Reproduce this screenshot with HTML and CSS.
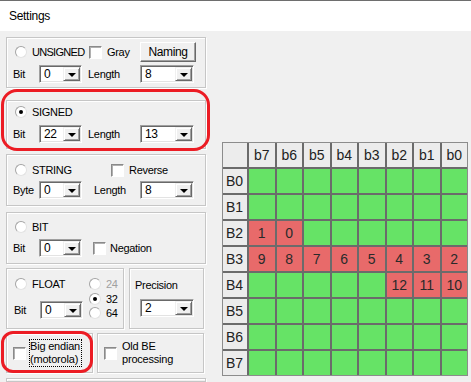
FILE: index.html
```html
<!DOCTYPE html>
<html lang="en">
<head>
    <meta charset="UTF-8">
    <meta name="viewport" content="width=device-width, initial-scale=1.0">
    <title>Settings</title>
    <link rel="stylesheet" href="styles.css">
</head>
<body>

    <!-- Window title -->
    <div class="titlebar">Settings</div>

    <div class="main">
        <!-- Left column: signal type settings -->
        <div class="left">

            <div class="group g-unsigned">
                <div class="row top-row">
                    <span class="radio"></span>
                    <span class="opt w-unsigned">UNSIGNED</span>
                    <span class="check"></span>
                    <span class="opt w-gray">Gray</span>
                    <span class="button naming">Naming</span>
                </div>
                <div class="row field-row">
                    <span class="field-label">Bit</span>
                    <span class="combo small"><span class="val">0</span><span class="drop"></span></span>
                    <span class="field-label len">Length</span>
                    <span class="combo wide"><span class="val">8</span><span class="drop"></span></span>
                </div>
            </div>

            <div class="group g-signed">
                <div class="row top-row">
                    <span class="radio checked"></span>
                    <span class="opt">SIGNED</span>
                </div>
                <div class="row field-row">
                    <span class="field-label">Bit</span>
                    <span class="combo small"><span class="val">22</span><span class="drop"></span></span>
                    <span class="field-label len">Length</span>
                    <span class="combo wide"><span class="val">13</span><span class="drop"></span></span>
                </div>
            </div>

            <div class="group g-string">
                <div class="row top-row">
                    <span class="radio"></span>
                    <span class="opt w-string">STRING</span>
                    <span class="check"></span>
                    <span class="opt">Reverse</span>
                </div>
                <div class="row field-row">
                    <span class="field-label">Byte</span>
                    <span class="combo small"><span class="val">0</span><span class="drop"></span></span>
                    <span class="field-label len len-string">Length</span>
                    <span class="combo wide"><span class="val">8</span><span class="drop"></span></span>
                </div>
            </div>

            <div class="group g-bit">
                <div class="row top-row">
                    <span class="radio"></span>
                    <span class="opt">BIT</span>
                </div>
                <div class="row field-row">
                    <span class="field-label">Bit</span>
                    <span class="combo small"><span class="val">0</span><span class="drop"></span></span>
                    <span class="check neg-check"></span>
                    <span class="opt">Negation</span>
                </div>
            </div>

            <div class="pair float-row">
                <div class="group g-float">
                    <div class="float-left">
                        <div class="row top-row">
                            <span class="radio"></span>
                            <span class="opt">FLOAT</span>
                        </div>
                        <div class="row field-row float-bit">
                            <span class="field-label">Bit</span>
                            <span class="combo small"><span class="val">0</span><span class="drop"></span></span>
                        </div>
                    </div>
                    <div class="float-sizes">
                        <div class="row size-row"><span class="radio"></span><span class="opt disabled">24</span></div>
                        <div class="row size-row second"><span class="radio checked"></span><span class="opt">32</span></div>
                        <div class="row size-row"><span class="radio"></span><span class="opt">64</span></div>
                    </div>
                </div>
                <div class="group g-precision">
                    <div class="prec-label">Precision</div>
                    <span class="combo wide prec-combo"><span class="val">2</span><span class="drop"></span></span>
                </div>
            </div>

            <div class="pair endian-row">
                <div class="group g-endian">
                    <span class="check"></span>
                    <span class="two-line focused">Big endian<br>(motorola)</span>
                </div>
                <div class="group g-oldbe">
                    <span class="check"></span>
                    <span class="two-line">Old BE<br>processing</span>
                </div>
            </div>

            <div class="group g-more"></div>
        </div>

        <!-- Right side: bit layout of the message -->
        <div class="bitmap">
            <div class="hd corner"></div>
            <div class="hd">b7</div><div class="hd">b6</div><div class="hd">b5</div><div class="hd">b4</div>
            <div class="hd">b3</div><div class="hd">b2</div><div class="hd">b1</div><div class="hd">b0</div>

            <div class="rl">B0</div>
            <div class="c"></div><div class="c"></div><div class="c"></div><div class="c"></div>
            <div class="c"></div><div class="c"></div><div class="c"></div><div class="c"></div>

            <div class="rl">B1</div>
            <div class="c"></div><div class="c"></div><div class="c"></div><div class="c"></div>
            <div class="c"></div><div class="c"></div><div class="c"></div><div class="c"></div>

            <div class="rl">B2</div>
            <div class="c used">1</div><div class="c used">0</div><div class="c"></div><div class="c"></div>
            <div class="c"></div><div class="c"></div><div class="c"></div><div class="c"></div>

            <div class="rl">B3</div>
            <div class="c used">9</div><div class="c used">8</div><div class="c used">7</div><div class="c used">6</div>
            <div class="c used">5</div><div class="c used">4</div><div class="c used">3</div><div class="c used">2</div>

            <div class="rl">B4</div>
            <div class="c"></div><div class="c"></div><div class="c"></div><div class="c"></div>
            <div class="c"></div><div class="c used">12</div><div class="c used">11</div><div class="c used">10</div>

            <div class="rl">B5</div>
            <div class="c"></div><div class="c"></div><div class="c"></div><div class="c"></div>
            <div class="c"></div><div class="c"></div><div class="c"></div><div class="c"></div>

            <div class="rl">B6</div>
            <div class="c"></div><div class="c"></div><div class="c"></div><div class="c"></div>
            <div class="c"></div><div class="c"></div><div class="c"></div><div class="c"></div>

            <div class="rl">B7</div>
            <div class="c"></div><div class="c"></div><div class="c"></div><div class="c"></div>
            <div class="c"></div><div class="c"></div><div class="c"></div><div class="c"></div>
        </div>
    </div>

    <!-- Red highlight marks drawn over the screenshot -->
    <div class="mark mark-signed"></div>
    <div class="mark mark-endian"></div>

</body>
</html>
```

FILE: styles.css
```css
/* General page styling */
body {
    margin: 0;
    width: 471px;
    height: 382px;
    overflow: hidden;
    position: relative;
    background: #f0f0f0;
    font-family: 'Liberation Sans', Arial, sans-serif;
    font-size: 11px;
    letter-spacing: -0.3px;
    color: #000;
}

/* Title bar */
.titlebar {
    height: 30px;
    border-top: 1px solid #6e6e6e;
    background: #fff;
    padding-left: 9px;
    font-size: 12px;
    letter-spacing: -0.3px;
    line-height: 30px;
}

.main {
    display: flex;
    height: 351px;
    overflow: hidden;
}

/* Left column */
.left {
    width: 200px;
    margin-left: 6px;
    padding-top: 6px;
}

.group {
    box-sizing: border-box;
    border: 1px solid #c6c6c6;
    box-shadow: inset 1px 1px 0 #fff, 1px 1px 0 #fff;
}

.g-unsigned { height: 51px; padding-top: 7px; }
.g-signed   { height: 49px; padding-top: 4px; margin-top: 12px; }
.g-string   { height: 52px; padding-top: 8px; margin-top: 5px; }
.g-bit      { height: 52px; padding-top: 7px; margin-top: 6px; }

.g-unsigned .field-row { margin-top: 6px; }
.g-signed .field-row { margin-top: 6px; }
.g-string .field-row { margin-top: 4px; }
.g-bit .field-row { margin-top: 5px; }

.row {
    display: flex;
    align-items: center;
}

.top-row {
    height: 14px;
    padding-left: 8px;
}

.field-row {
    height: 18px;
    padding-left: 6px;
}

.opt {
    margin-left: 5px;
    white-space: nowrap;
}

.w-unsigned {
    width: 57px;
    letter-spacing: -0.7px;
}

.w-gray { width: 33px; }
.w-string { width: 79px; }

.disabled {
    color: #a0a0a0;
}

.field-label {
    width: 26px;
}

.field-label.len {
    width: 52px;
    margin-left: 6px;
}

.field-label.len-string {
    width: 46px;
    margin-left: 12px;
}

/* Radio buttons and check boxes */
.radio {
    box-sizing: border-box;
    width: 12px;
    height: 12px;
    border-radius: 50%;
    border: 1px solid;
    border-color: #a4a4a4 #e2e2e2 #e2e2e2 #a4a4a4;
    background: #fff;
    position: relative;
    flex-shrink: 0;
}

.radio.checked::after {
    content: '';
    position: absolute;
    left: 3px;
    top: 3px;
    width: 4px;
    height: 4px;
    border-radius: 50%;
    background: #000;
}

.check {
    box-sizing: border-box;
    width: 13px;
    height: 13px;
    border: 1px solid;
    border-color: #8a8a8a #fff #fff #8a8a8a;
    box-shadow: inset 1px 1px 0 #b0b0b0;
    background: #fff;
    flex-shrink: 0;
}

.neg-check {
    margin-left: 11px;
}

.neg-check + .opt {
    margin-left: 4px;
}

/* Push button */
.button {
    box-sizing: border-box;
    height: 20px;
    border: 1px solid;
    border-color: #fff #696969 #696969 #fff;
    box-shadow: inset -1px -1px 0 #a0a0a0;
    background: #f0f0f0;
    text-align: center;
    line-height: 18px;
    font-size: 12px;
    letter-spacing: -0.4px;
}

.naming {
    width: 56px;
}

/* Combo boxes */
.combo {
    box-sizing: border-box;
    display: flex;
    height: 18px;
    border: 1px solid;
    border-color: #a0a0a0 #fff #fff #a0a0a0;
    box-shadow: inset 1px 1px 0 #696969, inset -1px -1px 0 #e3e3e3;
    background: #fff;
    padding: 1px;
    flex-shrink: 0;
}

.combo.small { width: 43px; }
.combo.wide { width: 54px; }

.combo .val {
    flex: 1;
    padding-left: 3px;
    line-height: 14px;
    font-size: 12px;
    letter-spacing: -0.3px;
}

.drop {
    box-sizing: border-box;
    width: 17px;
    height: 14px;
    border: 1px solid;
    border-color: #f0f0f0 #696969 #696969 #f0f0f0;
    box-shadow: inset 1px 1px 0 #fff, inset -1px -1px 0 #a0a0a0;
    background: #f0f0f0;
    display: flex;
    align-items: center;
    justify-content: center;
}

.drop::after {
    content: '';
    border-top: 4px solid #000;
    border-left: 4px solid transparent;
    border-right: 4px solid transparent;
    margin-top: 1px;
}

/* Float and precision */
.pair {
    display: flex;
    gap: 5px;
}

.float-row {
    margin-top: 4px;
}

.g-float {
    width: 118px;
    height: 61px;
    display: flex;
}

.float-left {
    width: 82px;
    padding-top: 8px;
}

.float-bit {
    margin-top: 10px;
    padding-left: 7px;
}

.float-sizes {
    padding-top: 8px;
}

.size-row {
    height: 14px;
}

.size-row.second {
    margin-top: 1px;
}

.g-precision {
    width: 75px;
    height: 61px;
    padding: 10px 0 0 5px;
}

.prec-label {
    height: 12px;
    line-height: 12px;
}

.prec-combo {
    margin: 8px 0 0 5px;
}

/* Endianness */
.endian-row {
    margin-top: 4px;
    gap: 4px;
}

.g-endian,
.g-oldbe {
    height: 40px;
    display: flex;
    align-items: center;
    padding-left: 6px;
}

.g-endian { width: 87px; }
.g-oldbe { width: 107px; }

.two-line {
    margin-left: 4px;
    line-height: 13px;
    font-size: 11px;
    letter-spacing: -0.2px;
    border: 1px solid transparent;
}

.two-line.focused {
    border: 1px dotted #000;
    margin-left: 3px;
    padding-right: 1px;
}

.g-more {
    margin-top: 5px;
    height: 4px;
}

/* Bit layout table */
.bitmap {
    margin: 111px 0 0 16px;
    display: grid;
    grid-template-columns: 24px repeat(8, 25.5px);
    grid-template-rows: repeat(9, 24px);
    gap: 2px;
    border: 1px solid #8c8c8c;
    background: #6b6b6b;
    align-self: flex-start;
    font-size: 14px;
    letter-spacing: 0;
}

.hd,
.rl {
    background: #ececec;
    color: #222;
    line-height: 24px;
}

.hd {
    text-align: center;
}

.rl {
    padding-left: 3px;
}

.c {
    background: #66e366;
    color: #2a2a2a;
    text-align: center;
    line-height: 24px;
}

.c.used {
    background: #e86a6a;
}

/* Red annotation marks */
.mark {
    position: absolute;
    border: 3px solid #ec1c24;
    box-sizing: border-box;
}

.mark-signed {
    left: 1px;
    top: 89px;
    width: 209px;
    height: 62px;
    border-radius: 16px;
}

.mark-endian {
    left: 1px;
    top: 331px;
    width: 92px;
    height: 42px;
    border-radius: 12px;
}
```
